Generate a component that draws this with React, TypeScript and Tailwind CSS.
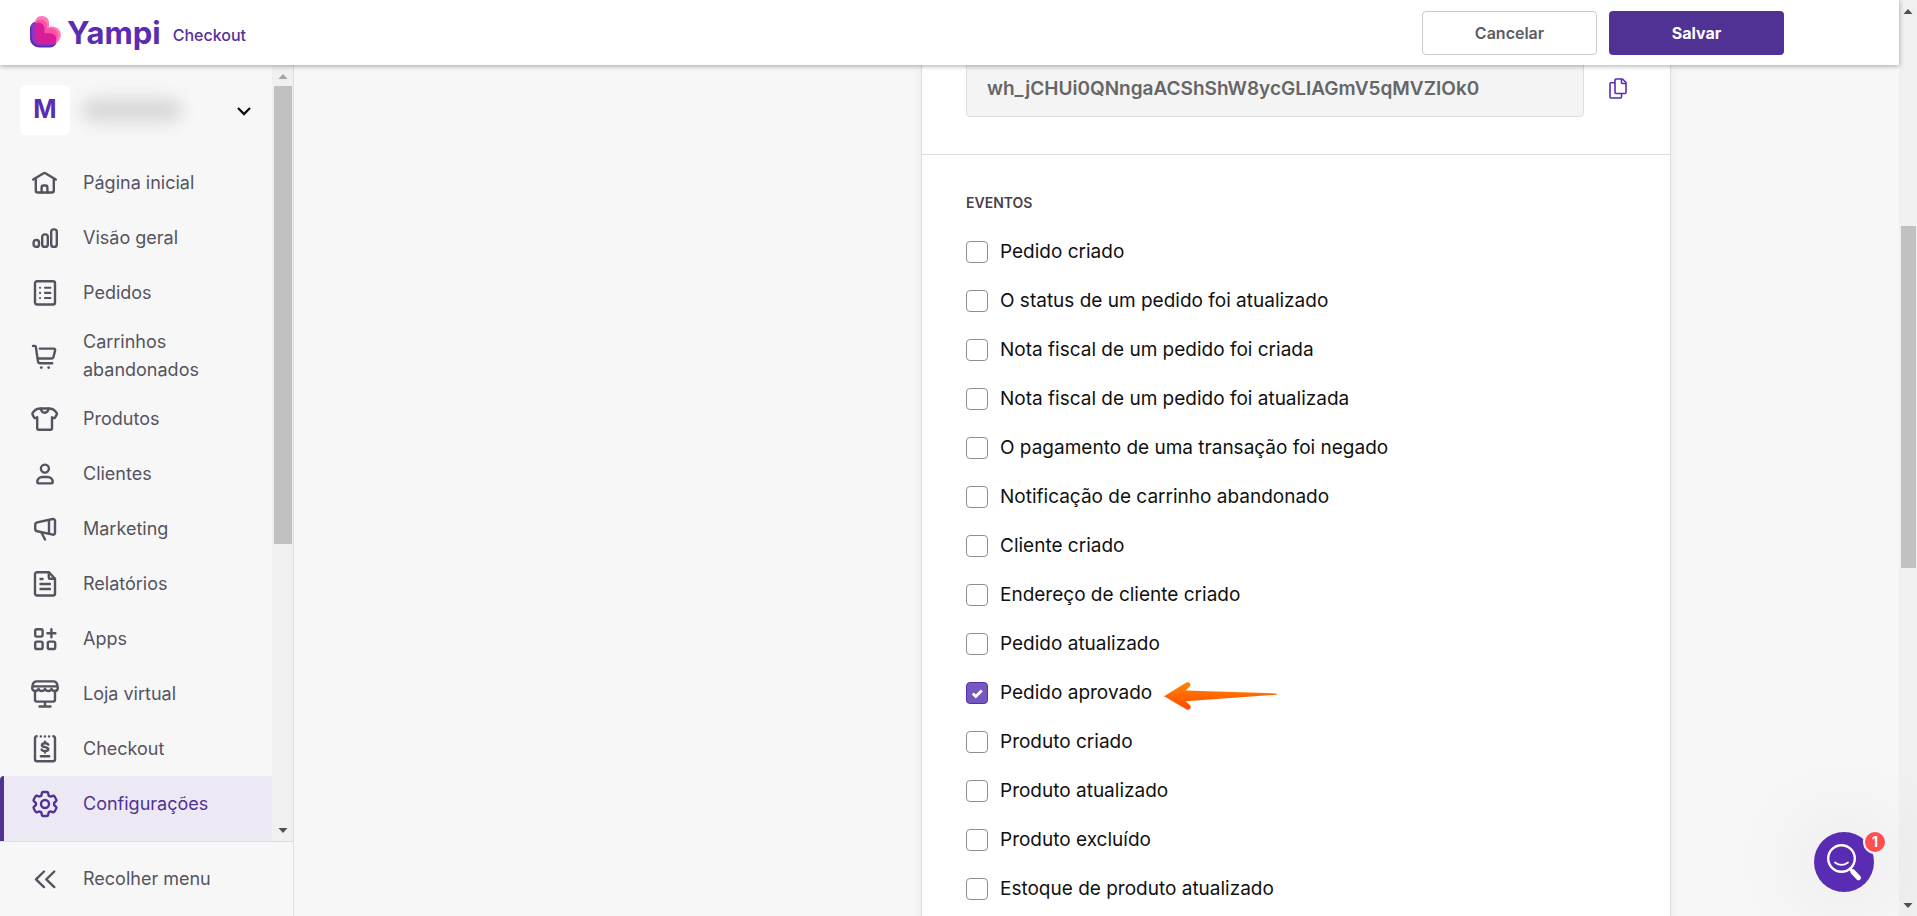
import React, { useState } from 'react';
import { HiOutlineCog6Tooth } from 'react-icons/hi2';

interface IconProps {
  children: React.ReactNode;
}

/**
 * Shared frame of the sidebar icons.
 */
function Icon({ children }: IconProps) {
  return (
    <svg
      viewBox="0 0 28 28"
      className="w-7 h-7 shrink-0"
      fill="none"
      stroke="currentColor"
      strokeWidth="2.4"
      strokeLinecap="round"
      strokeLinejoin="round"
      aria-hidden="true"
    >
      {children}
    </svg>
  );
}

const HomeIcon = () => (
  <Icon>
    <path d="M2.2 10.6 12.6 4.2a1.6 1.6 0 0 1 1.8 0L24.8 10.6" />
    <path d="M4.8 10v11.5a2 2 0 0 0 2 2h14a2 2 0 0 0 2-2V10" />
    <path d="M10.6 23.500v-5a2 2 0 0 1 2-2h1.800a2 2 0 0 1 2 2v5" />
  </Icon>
);

const ChartIcon = () => (
  <Icon>
    <rect x="2.6" y="16" width="5.4" height="6.8" rx="2.4" />
    <rect x="11.2" y="10.4" width="5.6" height="12.4" rx="2.4" />
    <rect x="20.2" y="5.4" width="5.6" height="17.4" rx="2.4" />
  </Icon>
);

const OrdersIcon = () => (
  <Icon>
    <rect x="4" y="2.3" width="20" height="23.2" rx="2" />
    <path d="M14 8.8h5.4M14 13.9h5.4M14 19h5.4M9 8.8h.1M9 13.9h.1M9 19h.1" strokeWidth="2.1" />
  </Icon>
);

const CartIcon = () => (
  <Icon>
    <path d="M2 3.9h1.8a1 1 0 0 1 1 .8L7 19.4a2 2 0 0 0 2 1.8h12.2" />
    <path d="M8.8 6.6h14a1.4 1.4 0 0 1 1.3 1.8l-1.6 6.6a2 2 0 0 1-2 1.5H7" />
    <circle cx="10.3" cy="25.6" r="1.4" fill="currentColor" stroke="none" />
    <circle cx="17.7" cy="25.6" r="1.4" fill="currentColor" stroke="none" />
  </Icon>
);

const ShirtIcon = () => (
  <Icon>
    <path d="M9.5 3.5h8.4c2.6 0 4.8.8 6.2 2.5l1.6 2.1c.3.5.3 1 0 1.5l-1.6 2.9c-.3.6-.9.8-1.5.5L21 12.2v11.3a1.2 1.2 0 0 1-1.2 1.2H7.4a1.2 1.2 0 0 1-1.2-1.2V12.2l-1.6.8c-.6.3-1.2.1-1.5-.5L1.6 9.6c-.3-.5-.3-1 0-1.5L3.2 6C4.6 4.3 6.9 3.5 9.5 3.5Z" />
    <path d="M10 3.7c.2 2.5 1.700 4 3.700 4s3.500-1.500 3.700-4" />
  </Icon>
);

const PersonIcon = () => (
  <Icon>
    <circle cx="13.9" cy="8.6" r="4" />
    <path d="M11.500 17h5c3 0 5.200 2 5.200 5.200 0 .7-.5 1.200-1.200 1.200h-13c-.7 0-1.200-.5-1.200-1.200 0-3.200 2.200-5.200 5.200-5.200Z" />
  </Icon>
);

const MegaphoneIcon = () => (
  <Icon>
    <path d="M21.8 4 6.2 7.4A2.5 2.5 0 0 0 4.2 9.8v4a2.5 2.5 0 0 0 2 2.4l15.6 3.5a1.8 1.8 0 0 0 2.2-1.7V5.7A1.8 1.8 0 0 0 21.8 4Z" />
    <path d="M18 5.2v13.4M10.4 17.5l3.600 7" />
  </Icon>
);

const ReportIcon = () => (
  <Icon>
    <path d="M6 2.3h12l6 6.5v14.7a2 2 0 0 1-2 2H6a2 2 0 0 1-2-2V4.3a2 2 0 0 1 2-2Z" />
    <path d="M17.8 2.6v5.2a1 1 0 0 0 1 1H24M9.5 9h2M9.5 14h9.4M9.5 19h9.4" />
  </Icon>
);

const AppsIcon = () => (
  <Icon>
    <rect x="4.2" y="4.2" width="7.4" height="7.4" rx="1.6" />
    <rect x="4.2" y="16.6" width="7.4" height="7.4" rx="1.6" />
    <rect x="16.8" y="16.6" width="7.4" height="7.4" rx="1.6" />
    <path d="M20.4 4.2v8M16.4 8.2h8" />
  </Icon>
);

const StoreIcon = () => (
  <Icon>
    <path d="M5.5 1.4h17c1.8 0 3.200 1.300 3.700 3l.6 3.600c0 1.800-1.200 3-3 3-1.600 0-2.800-.8-3.300-2.200-.5 1.400-1.700 2.200-3.200 2.200s-2.800-.8-3.300-2.200c-.5 1.400-1.800 2.200-3.300 2.200s-2.700-.8-3.200-2.200C7 10.200 5.800 11 4.200 11c-1.800 0-3-1.200-3-3l.6-3.600c.5-1.700 1.900-3 3.700-3Z" />
    <path d="M2 6.400h24M4 11v8.600a2 2 0 0 0 2 2h16a2 2 0 0 0 2-2V11M14 21.600v4.800M8.500 26.500h11" />
  </Icon>
);

const CheckoutIcon = () => (
  <Icon>
    <path d="M5.6 1.2C4.6 1.4 4 2 4 3v21.3a2 2 0 0 0 2 2h16a2 2 0 0 0 2-2V3c0-1-.6-1.6-1.6-1.8" />
    <path d="M9.8 1.4h.1M13.9 1.4h.1M18 1.4h.1" />
    <path d="M17.3 9.6c-.5-1-1.6-1.4-3.3-1.4-1.9 0-3.1.8-3.1 2 0 1.3 1.2 1.6 3.1 1.9s3.3.7 3.3 2c0 1.2-1.3 2-3.3 2-1.7 0-2.9-.5-3.4-1.5M14 6.6v1.5M14 16.2v1.3M9.9 21.3h8.3" />
  </Icon>
);

const CollapseIcon = () => (
  <Icon>
    <path d="m13 6.5-8 7.8 8 7.8M23.3 6.5l-8 7.8 8 7.8" />
  </Icon>
);

interface MenuItem {
  label: string;
  icon: React.ReactNode;
  active?: boolean;
}

const menuItems: MenuItem[] = [
  { label: 'Página inicial', icon: <HomeIcon /> },
  { label: 'Visão geral', icon: <ChartIcon /> },
  { label: 'Pedidos', icon: <OrdersIcon /> },
  { label: 'Carrinhos abandonados', icon: <CartIcon /> },
  { label: 'Produtos', icon: <ShirtIcon /> },
  { label: 'Clientes', icon: <PersonIcon /> },
  { label: 'Marketing', icon: <MegaphoneIcon /> },
  { label: 'Relatórios', icon: <ReportIcon /> },
  { label: 'Apps', icon: <AppsIcon /> },
  { label: 'Loja virtual', icon: <StoreIcon /> },
  { label: 'Checkout', icon: <CheckoutIcon /> },
  {
    label: 'Configurações',
    icon: <HiOutlineCog6Tooth className="w-8 h-8 -mx-0.5 shrink-0 [stroke-width:1.8]" />,
    active: true,
  },
];

const events = [
  'Pedido criado',
  'O status de um pedido foi atualizado',
  'Nota fiscal de um pedido foi criada',
  'Nota fiscal de um pedido foi atualizada',
  'O pagamento de uma transação foi negado',
  'Notificação de carrinho abandonado',
  'Cliente criado',
  'Endereço de cliente criado',
  'Pedido atualizado',
  'Pedido aprovado',
  'Produto criado',
  'Produto atualizado',
  'Produto excluído',
  'Estoque de produto atualizado',
];

function Logo() {
  return (
    <a href="#" className="flex items-center text-[#5a2bb3]">
      <svg viewBox="0 0 32 33" className="w-8 h-[33px]" aria-hidden="true">
        <path d="M7 5.5h5a5 5 0 0 1 5 5v3.5h4a6 6 0 0 1 6 6v4.5a7 7 0 0 1-7 7H9a9 9 0 0 1-9-9V12.5a7 7 0 0 1 7-7Z" fill="#5a2bb3" />
        <path d="M5 7.5A6.5 6.5 0 0 1 12.2.1c3.6 0 6.800 2.900 6.800 6.500v4.600c.9-.5 2-.8 3.200-.8 4.600 0 8.600 3.600 8.600 8.300 0 5-3.900 9.300-9 9.300H13c-4.400 0-8-3.600-8-8Z" fill="#ff7ab8" />
        <path d="M5 8.500c1-3 3.200-4.900 6-4.900 3.300 0 6 2.600 6 6v3.300c1-.6 2.200-1 3.500-1 4 0 7.300 3.200 7.300 7.200 0 4.500-3.500 8.900-8 8.900h-7c-4.300 0-7.800-3.600-7.800-8Z" fill="#ff52a0" />
        <path d="M1.500 14.500V10a5 5 0 0 1 4-4v14c0 4.500 3.500 7.500 8 7.500h12.500c-1.200 1.300-3 2-5 2H10.500c-5 0-9-4-9-9Z" fill="#8c35c0" />
        <path d="M5 7.600c.9-.8 2-1.200 3.300-1.200A6.200 6.200 0 0 1 14.500 12.600v4.700h5c4.200 0 6.800 2.600 6.800 6.400 0 1.500-.4 2.700-1.200 3.600-1 .4-2 .7-3.300.7H13c-4.500 0-8-3.600-8-8Z" fill="#d81d9b" />
      </svg>
      <span className="ml-[5px] text-[31px] leading-9 font-bold">Yampi</span>
    </a>
  );
}

interface ScrollbarProps {
  thumb: string;
  muted?: boolean;
}

function Scrollbar({ thumb, muted }: ScrollbarProps) {
  return (
    <div className="w-full h-full flex flex-col items-center bg-[#f0f0f0]" aria-hidden="true">
      <svg viewBox="0 0 18 21" className="w-[18px] h-[21px] shrink-0">
        <path d="M4.5 14 9 9l4.5 5Z" fill={muted ? '#a3a3a3' : '#505050'} />
      </svg>
      <div className="flex-1 w-full pl-0.5 pr-px">
        <div className={thumb} />
      </div>
      <svg viewBox="0 0 18 18" className="w-[18px] h-[18px] shrink-0">
        <path d="M4.5 5 9 10l4.5-5Z" fill="#505050" />
      </svg>
    </div>
  );
}

function Header() {
  return (
    <header className="relative z-10 h-[65px] shrink-0 flex items-center justify-between bg-white pl-[30px] pr-[115px] shadow-[0_1px_5px_rgba(0,0,0,0.35)]">
      <div className="flex items-center">
        <Logo />
        <span className="ml-3 mt-1 text-base font-medium text-[#55319c]">Checkout</span>
      </div>
      <div className="flex gap-3">
        <button className="w-[175px] h-11 rounded border border-[#cbcbce] bg-white text-base font-semibold text-[#5d5b66]">
          Cancelar
        </button>
        <button className="w-[175px] h-11 rounded bg-[#503295] text-base font-bold text-white">Salvar</button>
      </div>
    </header>
  );
}

function Sidebar() {
  return (
    <aside className="w-[294px] shrink-0 flex flex-col border-r border-[#dedede] text-[#55535f]">
      <div className="flex-1 min-h-0 flex">
        <nav className="flex-1 flex flex-col overflow-hidden">
          <button className="h-[90px] shrink-0 flex items-center px-5" aria-label="Trocar loja">
            <span className="w-[50px] h-[50px] rounded-md bg-white flex items-center justify-center text-[25px] font-bold text-[#5a2bb3]">
              M
            </span>
            <span className="ml-3 w-[100px] h-6 rounded-full bg-[#d8d8da] blur-[8px]" />
            <svg viewBox="0 0 16 16" className="ml-auto w-4 h-4" fill="none" stroke="#111" strokeWidth="2.4" aria-hidden="true">
              <path d="m2 6 6 6 6-6" />
            </svg>
          </button>
          <ul className="flex-1 flex flex-col text-lg">
            {menuItems.map((item) => (
              <li
                key={item.label}
                className={
                  item.active
                    ? 'flex-1 pt-1 bg-[#ede9f4] border-l-4 border-[#503295] rounded-tl text-[#503295]'
                    : 'pt-1 pb-[3px] border-l-4 border-transparent'
                }
              >
                <a href="#" className="min-h-12 py-1 pl-[27px] pr-8 flex items-center gap-6 leading-7">
                  {item.icon}
                  <span>{item.label}</span>
                </a>
              </li>
            ))}
          </ul>
        </nav>
        <div className="w-[21px]">
          <Scrollbar thumb="h-[458px] bg-[#c1c1c1]" muted />
        </div>
      </div>
      <button className="h-[75px] shrink-0 flex items-center gap-6 border-t border-[#dedede] pl-[31px] text-lg">
        <CollapseIcon />
        Recolher menu
      </button>
    </aside>
  );
}

function CopyIcon() {
  return (
    <svg viewBox="0 0 18 21" className="w-[18px] h-[21px]" fill="none" stroke="#5a2bb3" strokeWidth="1.6" strokeLinejoin="round" aria-hidden="true">
      <path d="M7 1h6.5L17 4.5V14.5a1 1 0 0 1-1 1H7a1 1 0 0 1-1-1V2a1 1 0 0 1 1-1Z" />
      <path d="M12.5 1.2v3.3a1 1 0 0 0 1 1H17M6 4.8H2a1 1 0 0 0-1 1V19a1 1 0 0 0 1 1h9.5a1 1 0 0 0 1-1v-3.5" />
    </svg>
  );
}

function Arrow() {
  return (
    <svg viewBox="0 0 113 34" className="ml-3 w-[113px] h-[34px]" aria-hidden="true">
      <defs>
        <linearGradient id="arrow" x1="0" y1="0" x2="0" y2="1">
          <stop offset="0.2" stopColor="#ff7a00" />
          <stop offset="1" stopColor="#ff4800" />
        </linearGradient>
      </defs>
      <path
        d="M0 20.3 22.5 6.6c2.8-1.200 5 1.600 3.300 4L21.500 14.500l90.500 3c1 .2 1 1.200 0 1.300L21.500 25.300l4.800 4.200c1.400 2.600-.8 5-3.600 4Z"
        fill="url(#arrow)"
      />
    </svg>
  );
}

/**
 * Webhook card: token field and the list of events to subscribe to.
 */
function WebhookCard() {
  const [selected, setSelected] = useState<string[]>(['Pedido aprovado']);

  const toggle = (event: string) => {
    setSelected((prev) => (prev.includes(event) ? prev.filter((e) => e !== event) : [...prev, event]));
  };

  return (
    <div className="ml-auto w-full max-w-[750px] bg-white border-x border-[#dedede] shadow-[0_0_12px_rgba(0,0,0,0.06)]">
      <div className="pl-11 pr-[34px] pb-[37px] border-b border-[#dedede] flex items-center">
        <input
          readOnly
          aria-label="Token"
          value="wh_jCHUi0QNngaACShShW8ycGLIAGmV5qMVZIOk0"
          className="-mt-1.5 flex-1 h-[58px] px-5 rounded border border-[#dedede] bg-[#f4f4f4] text-[19px] font-semibold text-[#666]"
        />
        <button className="-mt-1.5 ml-4 w-9 h-9 flex items-center justify-center" aria-label="Copiar">
          <CopyIcon />
        </button>
      </div>

      <div className="px-11 pt-9 pb-8">
        <h2 className="mb-3 text-sm leading-6 font-semibold text-[#45434d]">EVENTOS</h2>
        {events.map((event) => (
          <div key={event} className="h-[49px] flex items-center">
            <label className="flex items-center gap-3 text-[19px] leading-7 text-[#111]">
              <span className="relative w-[22px] h-[22px]">
                <input
                  type="checkbox"
                  checked={selected.includes(event)}
                  onChange={() => toggle(event)}
                  className="peer block w-full h-full appearance-none rounded border border-[#8f8f8f] bg-white checked:border-[#5a2bb3] checked:bg-[#7458c0]"
                />
                <svg
                  viewBox="0 0 22 22"
                  className="absolute inset-0 hidden pointer-events-none peer-checked:block"
                  fill="none"
                  stroke="#fff"
                  strokeWidth="2.8"
                  aria-hidden="true"
                >
                  <path d="m6.8 11.6 3 2.900 6-6" />
                </svg>
              </span>
              {event}
            </label>
            {event === 'Pedido aprovado' && <Arrow />}
          </div>
        ))}
      </div>
    </div>
  );
}

function HelpButton() {
  return (
    <button
      className="absolute right-[25px] bottom-6 z-20 w-[60px] h-[60px] rounded-full bg-[#5a2bb3] shadow-[0_0_90px_20px_rgba(0,0,0,0.06)]"
      aria-label="Ajuda"
    >
      <svg viewBox="0 0 60 60" className="w-full h-full" fill="none" stroke="#fff" strokeLinecap="round" aria-hidden="true">
        <circle cx="27.5" cy="26.5" r="13.3" strokeWidth="2.4" />
        <path d="M21 30.5c4 3 9 3 13 0" strokeWidth="1.8" />
        <path d="m36.5 37 1.5 2" strokeWidth="3" />
        <path d="m39 40 5.5 5.7" strokeWidth="5" />
      </svg>
      <span className="absolute -top-0.5 -right-[13px] w-6 h-6 rounded-full border-2 border-[#f3f3f3] bg-[#ff5050] flex items-center justify-center text-sm font-bold text-white">
        1
      </span>
    </button>
  );
}

export default function App() {
  return (
    <div className="h-screen flex overflow-hidden bg-[#f7f7f7] font-[Inter,sans-serif]">
      <div className="relative flex-1 min-w-0 flex flex-col">
        <Header />
        <div className="flex-1 min-h-0 flex">
          <Sidebar />
          <main className="flex-1 min-w-0 overflow-hidden">
            <div className="mx-auto max-w-[1149px]">
              <WebhookCard />
            </div>
          </main>
        </div>
        <HelpButton />
      </div>
      <div className="w-[18px] shrink-0">
        <Scrollbar thumb="mt-[205px] h-[342px] bg-[#c1c1c1]" />
      </div>
    </div>
  );
}
